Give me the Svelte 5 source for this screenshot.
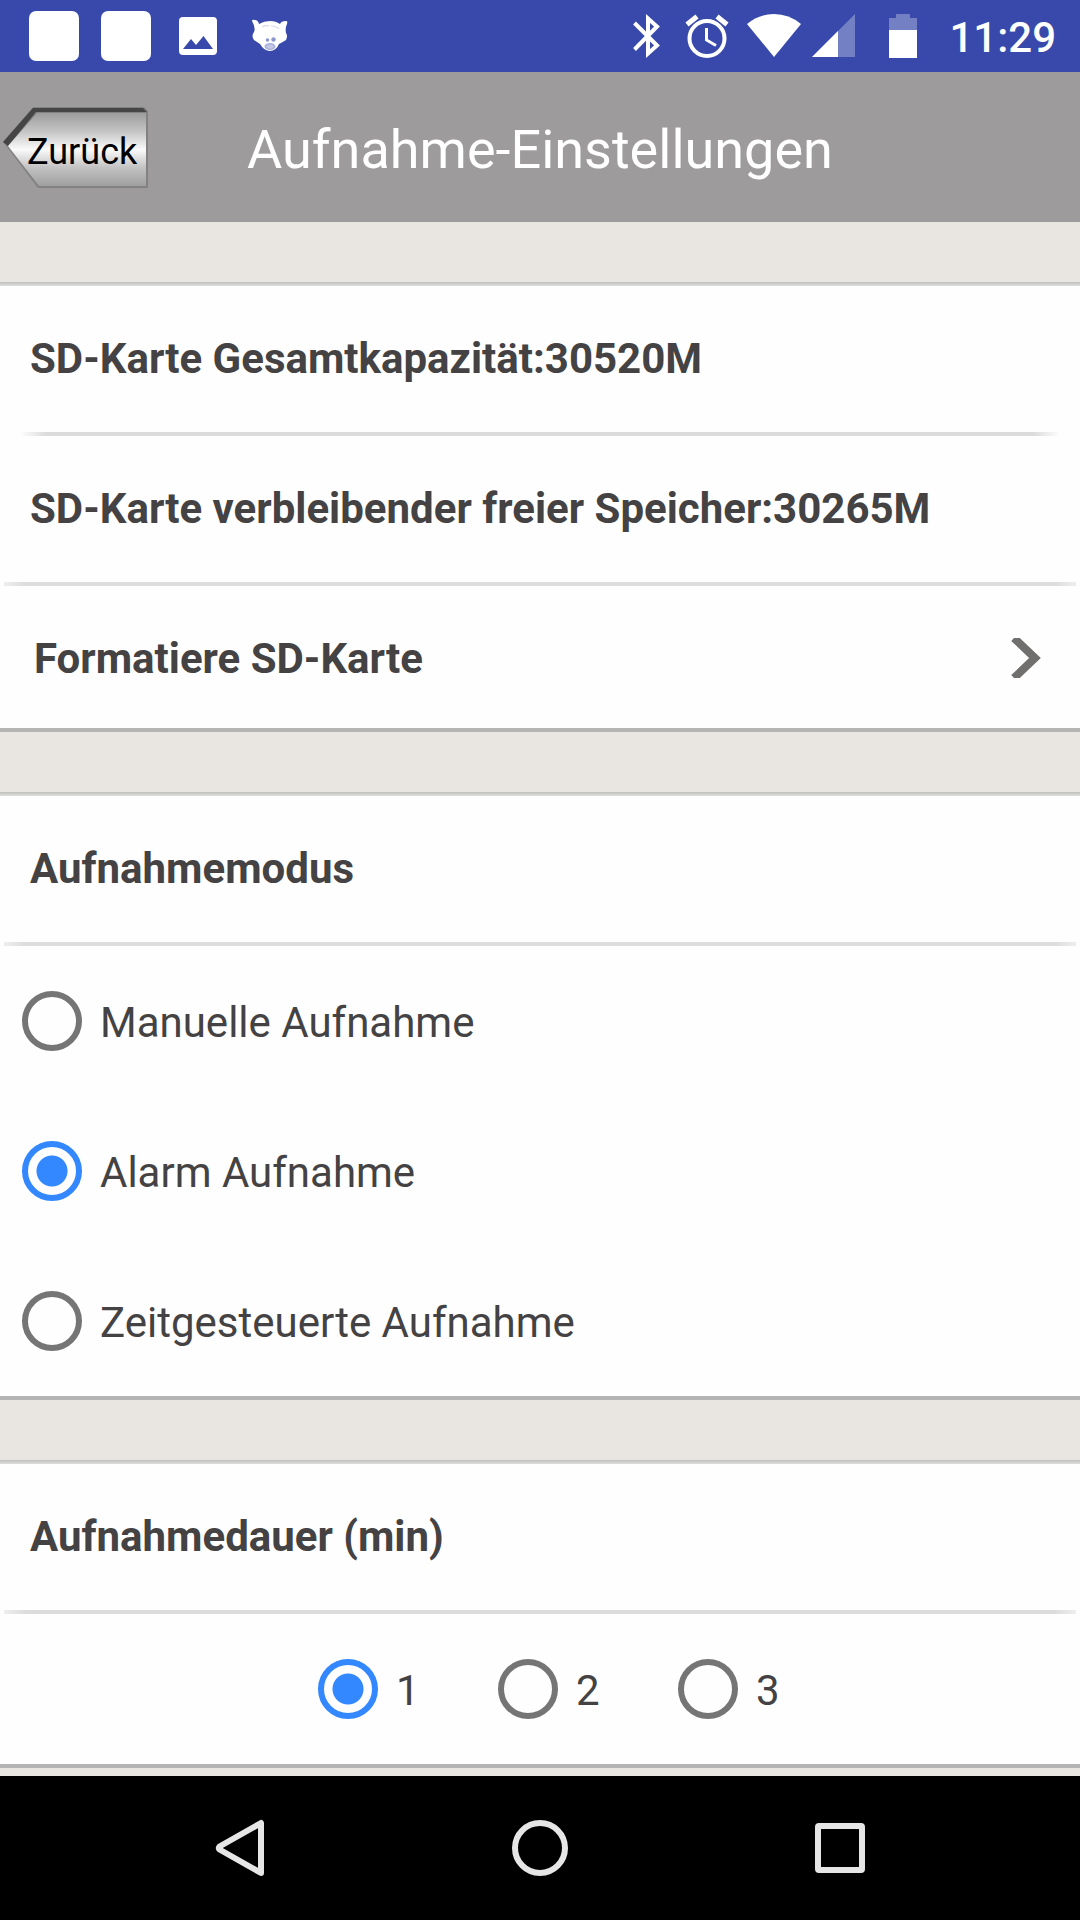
<script>
  const modes = ['Manuelle Aufnahme', 'Alarm Aufnahme', 'Zeitgesteuerte Aufnahme'];
  const durations = ['1', '2', '3'];
  let mode = $state('Alarm Aufnahme');
  let duration = $state('1');
</script>

<div class="screen">
  <div class="status">
    <div class="notices">
      <span class="tile"></span>
      <span class="tile"></span>
      <svg class="photo" width="38" height="38" viewBox="0 0 38 38" aria-hidden="true">
        <path fill="#fff" fill-rule="evenodd" d="M4 0H34Q38 0 38 4V34Q38 38 34 38H4Q0 38 0 34V4Q0 0 4 0ZM4 32H34L24.500 19L17 28L12 22Z" />
      </svg>
      <svg width="38" height="34" viewBox="0 0 38 34" aria-hidden="true">
        <path fill="#fff" d="M1 2Q1 0 4 1Q7 1 8 5Q13 2 19 2Q25 2 29 5Q30 2 35 2Q37 2 36 5Q34 9 35 14Q37 17 35 21Q32 23 28 25Q25 32 19 32Q13 32 9 25Q6 23 3 21Q0 17 3 13Q5 9 1 2Z" />
        <path fill="none" stroke="#d5d9ee" stroke-width="1.200" d="M11 8Q15 6 18 7M20 7Q25 7 28 10" />
        <circle cx="16.500" cy="21" r="1.800" fill="#8d97cf" />
        <circle cx="22.500" cy="20.500" r="2.200" fill="#8d97cf" />
        <ellipse cx="19" cy="27.500" rx="5.500" ry="3.500" fill="#a8b0dc" />
        <ellipse cx="19" cy="27.500" rx="3.500" ry="2" fill="#c3c8e7" />
      </svg>
    </div>
    <div class="system">
      <svg class="bluetooth" width="28" height="44" viewBox="0 0 28 44" fill="none" stroke="#fff" stroke-width="4" aria-hidden="true">
        <path d="M1.500 9L24 31.500L15 39.500V4.500L24 12.500L1.500 35.500" />
      </svg>
      <svg class="alarm" width="44" height="44" viewBox="0 0 44 44" fill="none" stroke="#fff" aria-hidden="true">
        <circle cx="22" cy="24.500" r="17.500" stroke-width="4" />
        <path stroke-width="5" d="M2 10.500L12 2.500M32 2.500L42 10.500" />
        <path stroke-width="3" d="M21.500 14V26L31 31.500" />
      </svg>
      <svg class="wifi" width="54" height="44" viewBox="0 0 54 44" aria-hidden="true">
        <path fill="#fff" d="M0 10Q12 0 27 0Q42 0 54 10L27 43Z" />
      </svg>
      <svg class="signal" width="44" height="44" viewBox="0 0 44 44" aria-hidden="true">
        <path fill="#fff" fill-opacity=".3" d="M0 43L43 0V43Z" />
        <path fill="#fff" d="M0 43L26 17V43Z" />
      </svg>
      <svg class="battery" width="28" height="44" viewBox="0 0 28 44" aria-hidden="true">
        <path fill="#fff" fill-opacity=".3" d="M0 4H7V0H21V4H28V16H0Z" />
        <path fill="#fff" d="M0 16H28V44H0Z" />
      </svg>
      <time>11:29</time>
    </div>
  </div>

  <header>
    <button class="back" type="button">
      <svg width="150" height="84" viewBox="0 0 150 84" aria-hidden="true">
        <defs>
          <linearGradient id="metal" x1="0" y1="0" x2="0" y2="1">
            <stop offset="0" stop-color="#9c9c9c" />
            <stop offset=".25" stop-color="#c4c4c4" />
            <stop offset=".5" stop-color="#fafafa" />
            <stop offset=".75" stop-color="#c2c2c2" />
            <stop offset="1" stop-color="#9f9f9f" />
          </linearGradient>
        </defs>
        <path fill="#828282" d="M3 37L33 2H144L148 6V83H38L7 42Z" />
        <path fill="#454545" d="M3 37L33 3H143L147 7H36L8 41Z" />
        <path fill="url(#metal)" d="M8 41L37 8H146V81H39Z" />
      </svg>
      <span>Zurück</span>
    </button>
    <h1>Aufnahme-Einstellungen</h1>
  </header>

  <main>
    <section class="card storage">
      <p class="row first">SD-Karte Gesamtkapazität:30520M</p>
      <p class="row inset">SD-Karte verbleibender freier Speicher:30265M</p>
      <button class="row ruled action" type="button">
        Formatiere SD-Karte
        <svg width="30" height="40" viewBox="0 0 30 40" fill="none" stroke="#706f6d" stroke-width="8" aria-hidden="true">
          <path d="M3 0L24 20L3 40" />
        </svg>
      </button>
    </section>

    <section class="card closed">
      <h2 class="row first" id="mode-title">Aufnahmemodus</h2>
      <div class="options rule" role="radiogroup" aria-labelledby="mode-title">
        {#each modes as name}
          <label class="option">
            <input type="radio" name="mode" value={name} bind:group={mode} />
            <span>{name}</span>
          </label>
        {/each}
      </div>
    </section>

    <section class="card closed">
      <h2 class="row first" id="duration-title">Aufnahmedauer (min)</h2>
      <div class="options rule inline" role="radiogroup" aria-labelledby="duration-title">
        {#each durations as name}
          <label class="option">
            <input type="radio" name="duration" value={name} bind:group={duration} />
            <span>{name}</span>
          </label>
        {/each}
      </div>
    </section>
  </main>

  <nav>
    <button type="button" aria-label="Zurück">
      <svg width="60" height="60" viewBox="0 0 60 60"><path d="M51 5V55L9.500 31.500Q8 30 9.500 28.500Z" /></svg>
    </button>
    <button type="button" aria-label="Startseite">
      <svg width="60" height="60" viewBox="0 0 60 60"><circle cx="30" cy="30" r="25" /></svg>
    </button>
    <button type="button" aria-label="Übersicht">
      <svg width="60" height="60" viewBox="0 0 60 60"><rect x="8" y="8" width="44" height="44" rx="1" /></svg>
    </button>
  </nav>
</div>

<style>
  :global(body) {
    margin: 0;
    background: #e9e6e1;
  }

  .screen {
    display: flex;
    flex-direction: column;
    min-height: 100vh;
    font-family: Roboto, 'Liberation Sans', sans-serif;
    font-size: 42px;
    color: #444243;
    background: #e9e6e1;
  }

  svg {
    display: block;
    flex: none;
  }

  button {
    margin: 0;
    padding: 0;
    border: 0;
    background: none;
    font: inherit;
    color: inherit;
    cursor: pointer;
  }

  .status {
    display: flex;
    justify-content: space-between;
    height: 72px;
    padding: 0 24px 0 29px;
    color: #fff;
    background: #3949ab;
  }

  .notices,
  .system {
    display: flex;
    align-items: center;
  }

  .tile {
    width: 50px;
    height: 50px;
    margin-right: 22px;
    border-radius: 7px;
    background: #fff;
  }

  .photo {
    margin: 0 34px 0 6px;
  }

  .bluetooth {
    margin-right: 24px;
  }

  .alarm {
    margin-right: 18px;
  }

  .wifi {
    margin-right: 11px;
  }

  .signal {
    margin-right: 33px;
  }

  .battery {
    margin-right: 32px;
  }

  time {
    font-weight: 500;
    padding-top: 2px;
  }

  header {
    display: grid;
    grid-template-columns: 1fr auto 1fr;
    align-items: center;
    height: 150px;
    background: #9e9b9c;
  }

  h1 {
    margin: 0;
    padding-top: 4px;
    font-size: 54px;
    font-weight: 400;
    color: #fff;
  }

  .back {
    display: grid;
    justify-self: start;
    align-items: center;
    font-size: 36px;
    color: #000;
  }

  .back svg,
  .back span {
    grid-area: 1 / 1;
  }

  .back span {
    padding: 9px 0 0 27px;
    text-align: left;
  }

  main {
    flex: 1;
    display: flex;
    flex-direction: column;
    gap: 60px;
    padding-top: 60px;
  }

  .card {
    background: #fefefe;
  }

  .storage {
    box-shadow: inset 0 -4px #b3b4b3;
  }

  .closed {
    border-bottom: 4px solid #b3b4b3;
  }

  .row {
    display: flex;
    align-items: center;
    box-sizing: border-box;
    width: 100%;
    min-height: 150px;
    margin: 0;
    padding: 2px 30px 0;
    font-size: 42px;
    font-weight: 700;
  }

  .first {
    background: linear-gradient(#c0c0bf, #dededd) top / 100% 4px no-repeat;
  }

  .inset {
    background: linear-gradient(90deg, transparent 20px, #dcdcdc 46px, #dcdcdc calc(100% - 46px), transparent calc(100% - 20px)) top / 100% 4px no-repeat;
  }

  .ruled,
  .rule {
    background: linear-gradient(90deg, transparent 4px, #eee 4px, #dcdcdc 26px, #dcdcdc calc(100% - 26px), #eee calc(100% - 4px), transparent calc(100% - 4px)) top / 100% 4px no-repeat;
  }

  .action {
    justify-content: space-between;
    padding: 2px 39px 0 34px;
    text-align: left;
  }

  .options {
    padding-top: 4px;
  }

  .option {
    display: flex;
    align-items: center;
    gap: 18px;
    height: 150px;
    padding-left: 22px;
  }

  .option span {
    padding-top: 2px;
  }

  .inline {
    display: flex;
    justify-content: center;
  }

  .inline .option {
    box-sizing: border-box;
    width: 180px;
    padding-left: 48px;
  }

  input {
    appearance: none;
    flex: none;
    width: 60px;
    height: 60px;
    margin: 0;
    border: 6px solid #757575;
    border-radius: 50%;
  }

  input:checked {
    border-color: #3388ff;
    background: radial-gradient(circle, #3388ff 15px, transparent 16px);
  }

  nav {
    display: grid;
    grid-template-columns: repeat(3, 1fr);
    height: 144px;
    padding: 0 90px;
    background: #000;
  }

  nav button {
    display: grid;
    place-items: center;
  }

  nav svg {
    fill: none;
    stroke: #e6e6e6;
    stroke-width: 6;
    stroke-linejoin: round;
  }
</style>
